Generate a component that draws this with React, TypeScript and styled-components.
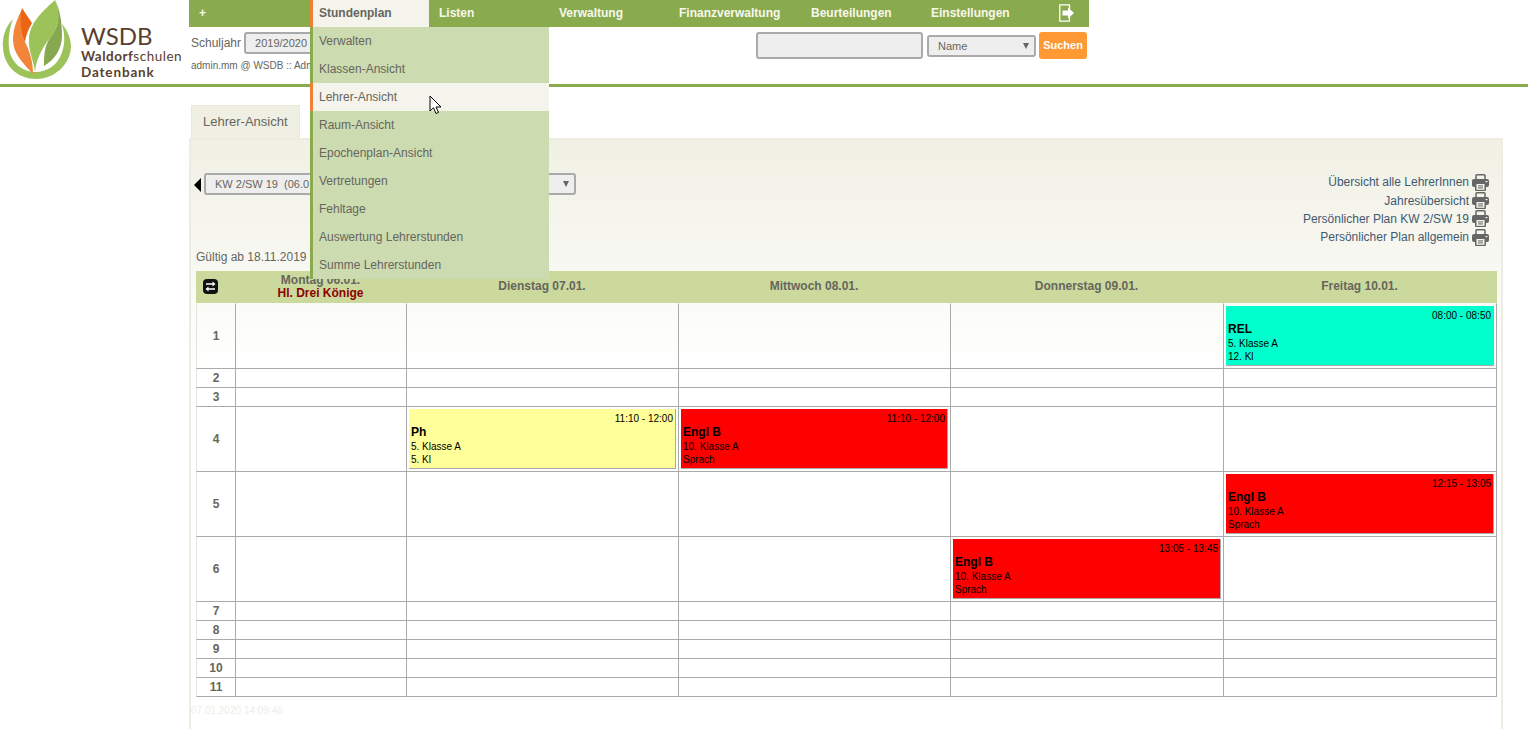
import React from "react";
import styled, { createGlobalStyle } from "styled-components";

const GlobalStyle = createGlobalStyle`
  html, body {
    margin: 0;
    padding: 0;
    height: 729px;
    overflow: hidden;
    background: #fff;
    font-family: "Liberation Sans", Arial, sans-serif;
    font-size: 12px;
    color: #66665e;
  }
`;

const Header = styled.header`
  display: flex;
  height: 84px;
  border-bottom: 3px solid #8aaa4e;
`;

const LogoWrap = styled.div`
  width: 189px;
  flex: none;
  display: flex;
  align-items: flex-start;
`;

const LogoText = styled.div`
  margin: 22px 0 0 3px;
  color: #5a3f2e;
  font-family: Lato, sans-serif;
  white-space: nowrap;
`;

const LogoTitle = styled.div`
  font-size: 24px;
  line-height: 27px;
`;

const LogoLine = styled.div<{ $spacing: number }>`
  font-size: 13.5px;
  line-height: 15px;
  font-weight: 700;
  letter-spacing: ${(p) => p.$spacing}px;
  margin-bottom: 1px;

  span {
    font-weight: 400;
  }
`;

const HeaderRight = styled.div`
  width: 900px;
  flex: none;
`;

const Nav = styled.nav`
  display: flex;
  height: 27px;
  background: #8aaa4e;
`;

const NavItem = styled.div<{ $width: number; $active?: boolean }>`
  position: relative;
  box-sizing: border-box;
  width: ${(p) => p.$width}px;
  line-height: 27px;
  font-weight: 700;
  padding-left: ${(p) => (p.$active ? 6 : 10)}px;
  color: ${(p) => (p.$active ? "#66665e" : "#f7f7ec")};
  background: ${(p) => (p.$active ? "#f5f4ec" : "transparent")};
  border-left: ${(p) => (p.$active ? "3px solid #ef7f35" : "none")};
`;

const LogoutIcon = styled.svg`
  display: block;
  margin: 4px 0 0 8px;
`;

const Dropdown = styled.div`
  position: absolute;
  z-index: 5;
  top: 27px;
  left: -3px;
  width: 239px;
  font-weight: 400;
`;

const DropItem = styled.div<{ $active?: boolean }>`
  position: relative;
  box-sizing: border-box;
  height: 28px;
  line-height: 28px;
  padding-left: 6px;
  color: #66665e;
  background: ${(p) => (p.$active ? "#f5f4ec" : "#cddbb0")};
  border-left: 3px solid ${(p) => (p.$active ? "#ef7f35" : "#8aaa4e")};
`;

const Cursor = styled.svg`
  position: absolute;
  z-index: 1;
  left: 116px;
  top: 12px;
`;

const SubRow = styled.div`
  display: flex;
  justify-content: space-between;
  padding: 5px 2px 0 2px;
`;

const YearBlock = styled.div`
  display: flex;
  flex-direction: column;
  gap: 6px;
`;

const YearRow = styled.div`
  display: flex;
  align-items: center;
  gap: 3px;
  color: #66665e;
`;

const SelectBox = styled.div<{ $width: number; $height: number }>`
  position: relative;
  box-sizing: border-box;
  width: ${(p) => p.$width}px;
  height: ${(p) => p.$height}px;
  border: 2px solid #aaa;
  border-radius: 3px;
  background: #eee;
  font-size: 11px;
  line-height: ${(p) => p.$height - 4}px;
  color: #66665e;
  padding-left: 9px;
  white-space: pre;

  &::after {
    content: "";
    position: absolute;
    right: 5px;
    top: 50%;
    margin-top: -3px;
    border-left: 3px solid transparent;
    border-right: 3px solid transparent;
    border-top: 6px solid #666;
  }
`;

const UserLine = styled.div`
  font-size: 10px;
  color: #66665e;
`;

const SearchRow = styled.div`
  display: flex;
  align-items: center;
  gap: 4px;
  height: 27px;
`;

const SearchInput = styled.div`
  box-sizing: border-box;
  width: 167px;
  height: 27px;
  border: 2px solid #aaa;
  border-radius: 3px;
  background: #eee;
`;

const SearchButton = styled.div`
  width: 48px;
  height: 27px;
  margin-left: -1px;
  border-radius: 3px;
  background: #ff9933;
  color: #fff;
  font-size: 11px;
  font-weight: 700;
  line-height: 27px;
  text-align: center;
`;

const Main = styled.main`
  padding: 18px 0 0 189px;
`;

const Tab = styled.div`
  box-sizing: border-box;
  margin-left: 2px;
  width: 109px;
  height: 33px;
  padding-left: 11px;
  font-size: 13px;
  line-height: 32px;
  background: #efefe3;
  border: 1px solid #e8e8dc;
  border-bottom: none;
  color: #66665e;
`;

const Panel = styled.section`
  box-sizing: border-box;
  width: 1314px;
  height: 620px;
  border: solid #ecece2;
  border-width: 2px 2px 0 2px;
  background: linear-gradient(#f0f0e4 0, #ffffff 230px);
`;

const Toolbar = styled.div`
  display: flex;
  justify-content: space-between;
  padding: 33px 12px 0 3px;
`;

const WeekPicker = styled.div`
  display: flex;
  align-items: flex-start;
  gap: 3px;
`;

const PrevArrow = styled.div`
  width: 0;
  height: 0;
  margin-top: 5px;
  border-top: 7px solid transparent;
  border-bottom: 7px solid transparent;
  border-right: 7px solid #000;
`;

const Links = styled.div`
  display: flex;
  flex-direction: column;
  align-items: flex-end;
`;

const PrintLink = styled.div`
  display: flex;
  align-items: center;
  gap: 3px;
  height: 18.4px;
  color: #3f5a70;
`;

const ValidFrom = styled.div`
  margin-top: 3px;
  padding-left: 5px;
  height: 21.4px;
  line-height: 15px;
  color: #66665e;
`;

const Grid = styled.table`
  width: 1301px;
  margin-left: 5px;
  table-layout: fixed;
  border-collapse: separate;
  border-spacing: 0;

  tbody tr:first-child td {
    border-top: 1px solid transparent;
  }
`;

const HeadCell = styled.th`
  height: 32px;
  padding: 0 2px 0 0;
  background: #ccd99c;
  font-size: 12px;
  line-height: 13px;
  font-weight: 700;
  color: #66665e;
  text-align: center;
  vertical-align: middle;
`;

const SwapIcon = styled.svg`
  display: block;
  margin-left: 7px;
`;

const Holiday = styled.div`
  color: #8b0000;
`;

const HourCell = styled.td<{ $height: number }>`
  height: ${(p) => p.$height}px;
  padding: 0;
  font-weight: 700;
  text-align: center;
  color: #66665e;
  border-right: 1px solid #aaa;
  border-bottom: 1px solid #aaa;
  border-left: 1px solid #e4e4dc;
`;

const Cell = styled.td`
  padding: 0;
  border-right: 1px solid #aaa;
  border-bottom: 1px solid #aaa;
  vertical-align: top;
`;

const Lesson = styled.div<{ $bg: string }>`
  box-sizing: border-box;
  height: 60px;
  margin: 2px;
  padding: 3px 2px 0 2px;
  background: ${(p) => p.$bg};
  border-right: 1px solid #aaa;
  border-bottom: 1px solid #aaa;
  color: #000;
  font-size: 10px;
  line-height: 13px;
`;

const LessonTime = styled.div`
  text-align: right;
`;

const LessonTitle = styled.div`
  font-size: 12px;
  font-weight: 700;
  line-height: 15px;
`;

const Timestamp = styled.div`
  margin-top: 8px;
  font-size: 10px;
  color: #eeeee6;
`;

type LessonData = { bg: string; time: string; title: string; cls: string; room: string };

const rel: LessonData = { bg: "#00ffcc", time: "08:00 - 08:50", title: "REL", cls: "5. Klasse A", room: "12. Kl" };
const ph: LessonData = { bg: "#ffff99", time: "11:10 - 12:00", title: "Ph", cls: "5. Klasse A", room: "5. Kl" };
const engl = (time: string): LessonData => ({ bg: "#ff0000", time, title: "Engl B", cls: "10. Klasse A", room: "Sprach" });

// hour number, row height, lesson per weekday column
const rows: { hour: number; height: number; lessons: Record<number, LessonData> }[] = [
  { hour: 1, height: 64, lessons: { 4: rel } },
  { hour: 2, height: 18, lessons: {} },
  { hour: 3, height: 18, lessons: {} },
  { hour: 4, height: 64, lessons: { 1: ph, 2: engl("11:10 - 12:00") } },
  { hour: 5, height: 64, lessons: { 4: engl("12:15 - 13:05") } },
  { hour: 6, height: 64, lessons: { 3: engl("13:05 - 13:45") } },
  { hour: 7, height: 18, lessons: {} },
  { hour: 8, height: 18, lessons: {} },
  { hour: 9, height: 18, lessons: {} },
  { hour: 10, height: 18, lessons: {} },
  { hour: 11, height: 18, lessons: {} },
];

const menu = [
  "Verwalten",
  "Klassen-Ansicht",
  "Lehrer-Ansicht",
  "Raum-Ansicht",
  "Epochenplan-Ansicht",
  "Vertretungen",
  "Fehltage",
  "Auswertung Lehrerstunden",
  "Summe Lehrerstunden",
];

const printLinks = [
  "Übersicht alle LehrerInnen",
  "Jahresübersicht",
  "Persönlicher Plan KW 2/SW 19",
  "Persönlicher Plan allgemein",
];

const columnWidths = [40, 171, 272, 272, 273, 273];
const days = ["Dienstag 07.01.", "Mittwoch 08.01.", "Donnerstag 09.01.", "Freitag 10.01."];

const Logo = () => (
  <svg width="78" height="84" viewBox="0 0 78 84">
    <path
      fill="#9cc25a"
      d="M13 19C5 27 2 38 3 48C4 67 19 79 36 79C53 79 70 66 71 47C71 38 67 30 62 24C65 35 65 44 62 52C58 66 46 72 36 72C22 72 10 62 9 47C8 37 10 27 13 19Z"
    />
    <path fill="#f2853a" d="M22 9C20 20 21 35 25 42C30 52 33 62 33 74C24 64 13 54 13 40C13 28 18 17 22 9Z" />
    <path fill="#ec6612" d="M22 8L32 23C28 30 26 35 25 42C21 35 19 20 22 8Z" />
    <path fill="#9cc25a" d="M55 0C44 10 30 22 29 38C28 50 34 62 35 72C36 60 42 48 50 38C60 27 60 12 55 0Z" />
    <path fill="#86a84e" d="M55 0C60 12 60 27 50 38C44 46 44 58 44 66C54 60 62 50 62 35C62 22 60 10 55 0Z" />
  </svg>
);

const PrinterIcon = () => (
  <svg width="17" height="17" viewBox="0 0 17 17">
    <path fill="none" stroke="#666" strokeWidth="1.5" d="M4 7V1.6Q4 .8 4.8 .8H12.2Q13 .8 13 1.6V7" />
    <rect x="0" y="5" width="17" height="8" rx="2" fill="#666" />
    <rect x="3" y="9" width="11" height="8" rx="1" fill="#666" />
    <rect x="4.5" y="10" width="8" height="5.8" fill="#f4f4ee" />
    <rect x="6" y="11.4" width="5" height="1" fill="#666" />
    <rect x="6" y="13.4" width="5" height="1" fill="#666" />
    <rect x="13.5" y="7" width="2" height="1.2" fill="#f4f4ee" />
  </svg>
);

const LessonCard = ({ data }: { data: LessonData }) => (
  <Lesson $bg={data.bg}>
    <LessonTime>{data.time}</LessonTime>
    <LessonTitle>{data.title}</LessonTitle>
    <div>{data.cls}</div>
    <div>{data.room}</div>
  </Lesson>
);

export default function App() {
  return (
    <>
      <GlobalStyle />
      <Header>
        <LogoWrap>
          <Logo />
          <LogoText>
            <LogoTitle>WSDB</LogoTitle>
            <LogoLine $spacing={0.5}>
              Waldorf<span>schulen</span>
            </LogoLine>
            <LogoLine $spacing={0.85}>Datenbank</LogoLine>
          </LogoText>
        </LogoWrap>
        <HeaderRight>
          <Nav>
            <NavItem $width={121}>+</NavItem>
            <NavItem $width={119} $active>
              Stundenplan
              <Dropdown>
                {menu.map((item) => (
                  <DropItem key={item} $active={item === "Lehrer-Ansicht"}>
                    {item}
                    {item === "Lehrer-Ansicht" && (
                      <Cursor width="14" height="20" viewBox="0 0 14 20">
                        <path fill="#fff" stroke="#000" strokeWidth="1" d="M1 1V16L4.5 12.8L7 18.5L9.5 17.4L7 12H12Z" />
                      </Cursor>
                    )}
                  </DropItem>
                ))}
              </Dropdown>
            </NavItem>
            <NavItem $width={120}>Listen</NavItem>
            <NavItem $width={120}>Verwaltung</NavItem>
            <NavItem $width={132}>Finanzverwaltung</NavItem>
            <NavItem $width={120}>Beurteilungen</NavItem>
            <NavItem $width={120}>Einstellungen</NavItem>
            <NavItem $width={48}>
              <LogoutIcon width="15" height="18" viewBox="0 0 15 18">
                <path fill="none" stroke="#fff" strokeWidth="1.3" d="M10.5 5V.8H.8V17.2H10.5V13" />
                <path fill="#fff" d="M3.5 6.6H9V3.6L15 9L9 14.4V11.4H3.5Z" />
              </LogoutIcon>
            </NavItem>
          </Nav>
          <SubRow>
            <YearBlock>
              <YearRow>
                Schuljahr
                <SelectBox $width={100} $height={22}>
                  2019/2020
                </SelectBox>
              </YearRow>
              <UserLine>admin.mm @ WSDB :: Admin</UserLine>
            </YearBlock>
            <SearchRow>
              <SearchInput />
              <SelectBox $width={109} $height={22}>
                Name
              </SelectBox>
              <SearchButton>Suchen</SearchButton>
            </SearchRow>
          </SubRow>
        </HeaderRight>
      </Header>
      <Main>
        <Tab>Lehrer-Ansicht</Tab>
        <Panel>
          <Toolbar>
            <WeekPicker>
              <PrevArrow />
              <SelectBox $width={372} $height={22}>
                {"KW 2/SW 19  (06.01.2020 - 10.01.2020)"}
              </SelectBox>
            </WeekPicker>
            <Links>
              {printLinks.map((link) => (
                <PrintLink key={link}>
                  {link}
                  <PrinterIcon />
                </PrintLink>
              ))}
            </Links>
          </Toolbar>
          <ValidFrom>Gültig ab 18.11.2019</ValidFrom>
          <Grid>
            <colgroup>
              {columnWidths.map((width, i) => (
                <col key={i} style={{ width }} />
              ))}
            </colgroup>
            <thead>
              <tr>
                <HeadCell>
                  <SwapIcon width="15" height="15" viewBox="0 0 15 15">
                    <rect width="15" height="15" rx="4" fill="#111" />
                    <path fill="#fff" d="M3 4.2H9.5V2.6L12.5 5L9.5 7.4V5.8H3Z" />
                    <path fill="#fff" d="M12 9.2H5.5V7.6L2.5 10L5.5 12.4V10.8H12Z" />
                  </SwapIcon>
                </HeadCell>
                <HeadCell>
                  Montag 06.01.
                  <Holiday>Hl. Drei Könige</Holiday>
                </HeadCell>
                {days.map((day) => (
                  <HeadCell key={day}>{day}</HeadCell>
                ))}
              </tr>
            </thead>
            <tbody>
              {rows.map((row) => (
                <tr key={row.hour}>
                  <HourCell $height={row.height}>{row.hour}</HourCell>
                  {[0, 1, 2, 3, 4].map((day) => (
                    <Cell key={day}>{row.lessons[day] && <LessonCard data={row.lessons[day]} />}</Cell>
                  ))}
                </tr>
              ))}
            </tbody>
          </Grid>
          <Timestamp>07.01.2020 14:09:46</Timestamp>
        </Panel>
      </Main>
    </>
  );
}
